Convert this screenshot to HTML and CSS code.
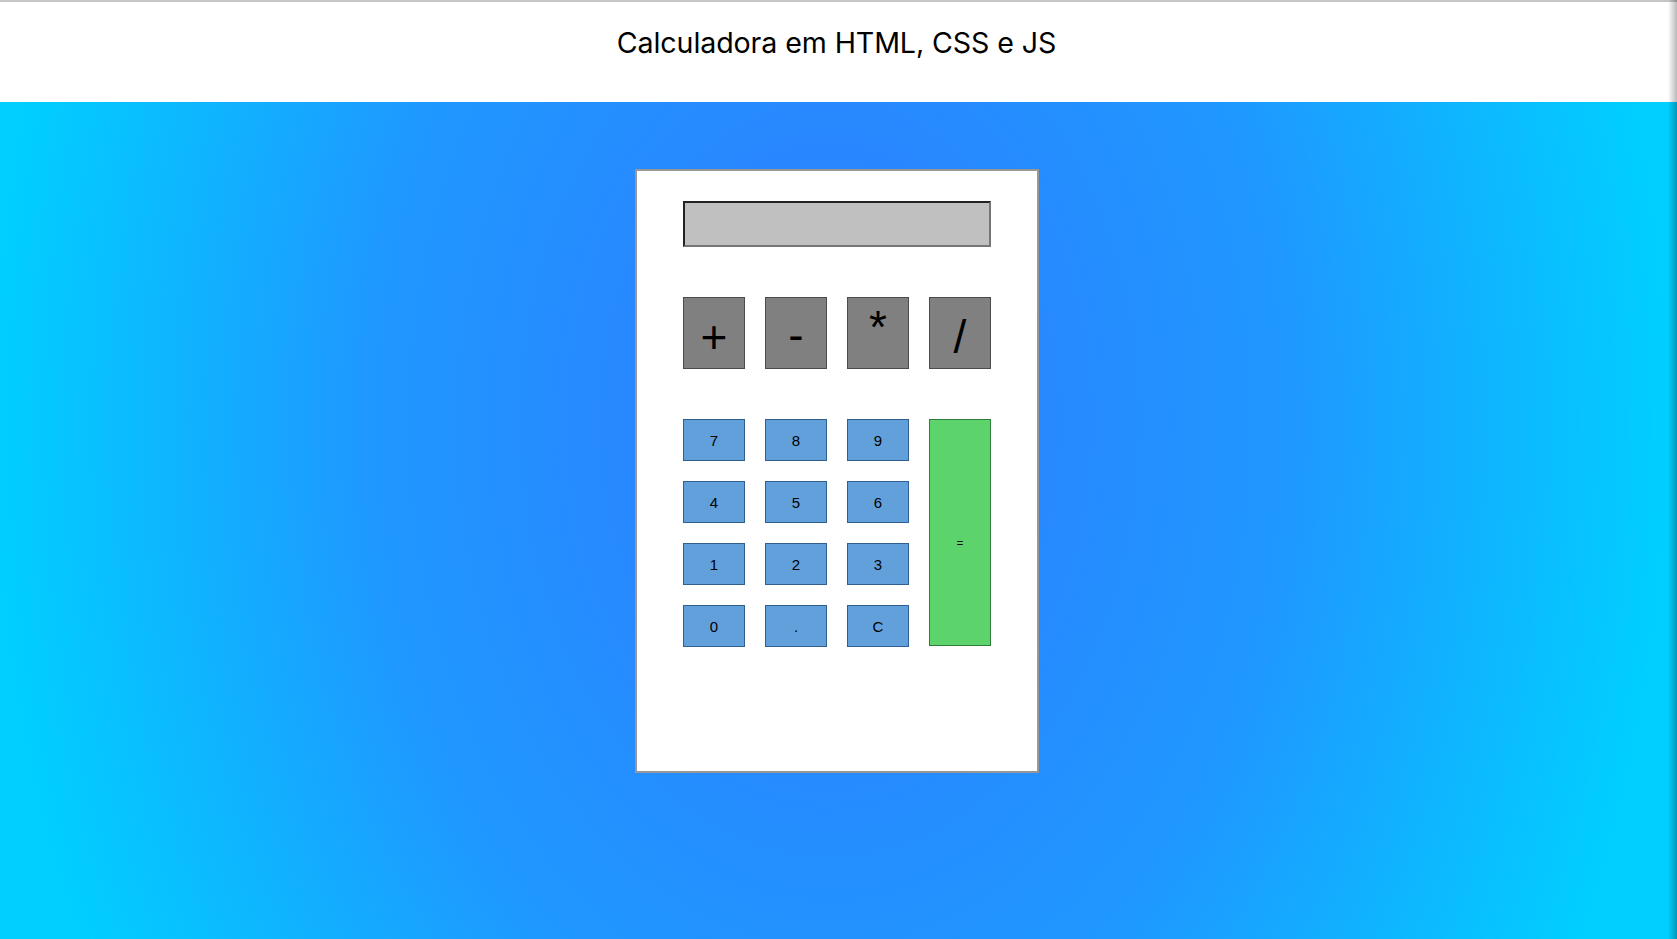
FILE: index.html
```html
<!DOCTYPE html>
<html lang="pt-BR">
<head>
<meta charset="utf-8">
<title>Calculadora</title>
<link rel="stylesheet" href="styles.css">
</head>
<body>
  <header class="topo">
    <h1 class="titulo">Calculadora em HTML, CSS e JS</h1>
  </header>
  <main class="fundo">
    <div class="calculadora">
      <input class="visor" type="text" readonly>
      <div class="operadores">
        <button class="btn-op">+</button>
        <button class="btn-op op-menos">-</button>
        <button class="btn-op op-ast">*</button>
        <button class="btn-op">/</button>
      </div>
      <div class="teclado">
        <button class="btn-num">7</button>
        <button class="btn-num">8</button>
        <button class="btn-num">9</button>
        <button class="btn-igual">=</button>
        <button class="btn-num">4</button>
        <button class="btn-num">5</button>
        <button class="btn-num">6</button>
        <button class="btn-num">1</button>
        <button class="btn-num">2</button>
        <button class="btn-num">3</button>
        <button class="btn-num">0</button>
        <button class="btn-num">.</button>
        <button class="btn-num">C</button>
      </div>
    </div>
  </main>
  <div class="sombra-direita"></div>
</body>
</html>
```
FILE: styles.css
```css
html, body {
  margin: 0;
  padding: 0;
}

body {
  min-height: 939px;
  display: flex;
  flex-direction: column;
  font-family: "Liberation Sans", Arial, sans-serif;
  background: radial-gradient(ellipse 50% 125% at 49.5% 45%, #2f7bff 0%, #1f98ff 55%, #00cfff 100%);
}

.topo {
  background: #ffffff;
  border-top: 2px solid #c6c6c6;
  box-sizing: border-box;
  height: 102px;
  padding: 23px 4px 0 0;
}

.titulo {
  margin: 0;
  text-align: center;
  font-family: Inter, "Liberation Sans", sans-serif;
  font-weight: 400;
  font-size: 28.6px;
  color: #000;
  letter-spacing: -0.1px;
}

.fundo {
  flex: 1;
  padding: 67px 3px 0 0;
}

.calculadora {
  width: 308px;
  margin: 0 auto;
  background: #ffffff;
  border: 2px solid #979797;
  padding: 30px 46px 124px;
  display: flex;
  flex-direction: column;
  align-items: flex-start;
}

.visor {
  width: 308px;
  height: 46px;
  box-sizing: border-box;
  margin: 0;
  padding: 0;
  background: #c0c0c0;
  border: 2px solid;
  border-color: #222222 #767676 #767676 #222222;
  outline: none;
}

.operadores {
  margin-top: 50px;
  display: grid;
  grid-template-columns: repeat(4, 62px);
  column-gap: 20px;
}

.btn-op {
  height: 72px;
  padding: 8px 0 0;
  margin: 0;
  background: #808080;
  border: 1px solid #4b4b4b;
  font-family: "Liberation Sans", Arial, sans-serif;
  font-size: 46px;
  font-weight: 300;
  line-height: 56px;
  color: #000;
}

.op-menos {
  padding: 4px 0 0;
  transform-origin: center;
}

.op-ast {
  line-height: 40px;
  padding: 0 0 12px;
}

.teclado {
  margin-top: 50px;
  display: grid;
  grid-template-columns: repeat(4, 62px);
  grid-template-rows: repeat(4, 42px);
  gap: 20px;
}

.btn-num {
  padding: 0;
  margin: 0;
  background: #62a0dc;
  border: 1px solid #2f5f8c;
  font-family: "Liberation Sans", Arial, sans-serif;
  font-size: 15px;
  color: #000;
}

.btn-igual {
  grid-column: 4;
  grid-row: 1 / span 4;
  padding: 20px 0 0;
  margin: 0 0 1px;
  background: #5cd46b;
  border: 1px solid #2f7c3b;
  font-family: "Liberation Sans", Arial, sans-serif;
  font-size: 11px;
  color: #000;
}

.sombra-direita {
  position: absolute;
  top: 0;
  right: 0;
  width: 9px;
  height: 939px;
  background: linear-gradient(to right, rgba(0, 0, 0, 0), rgba(0, 0, 0, 0.28));
  pointer-events: none;
}
```
